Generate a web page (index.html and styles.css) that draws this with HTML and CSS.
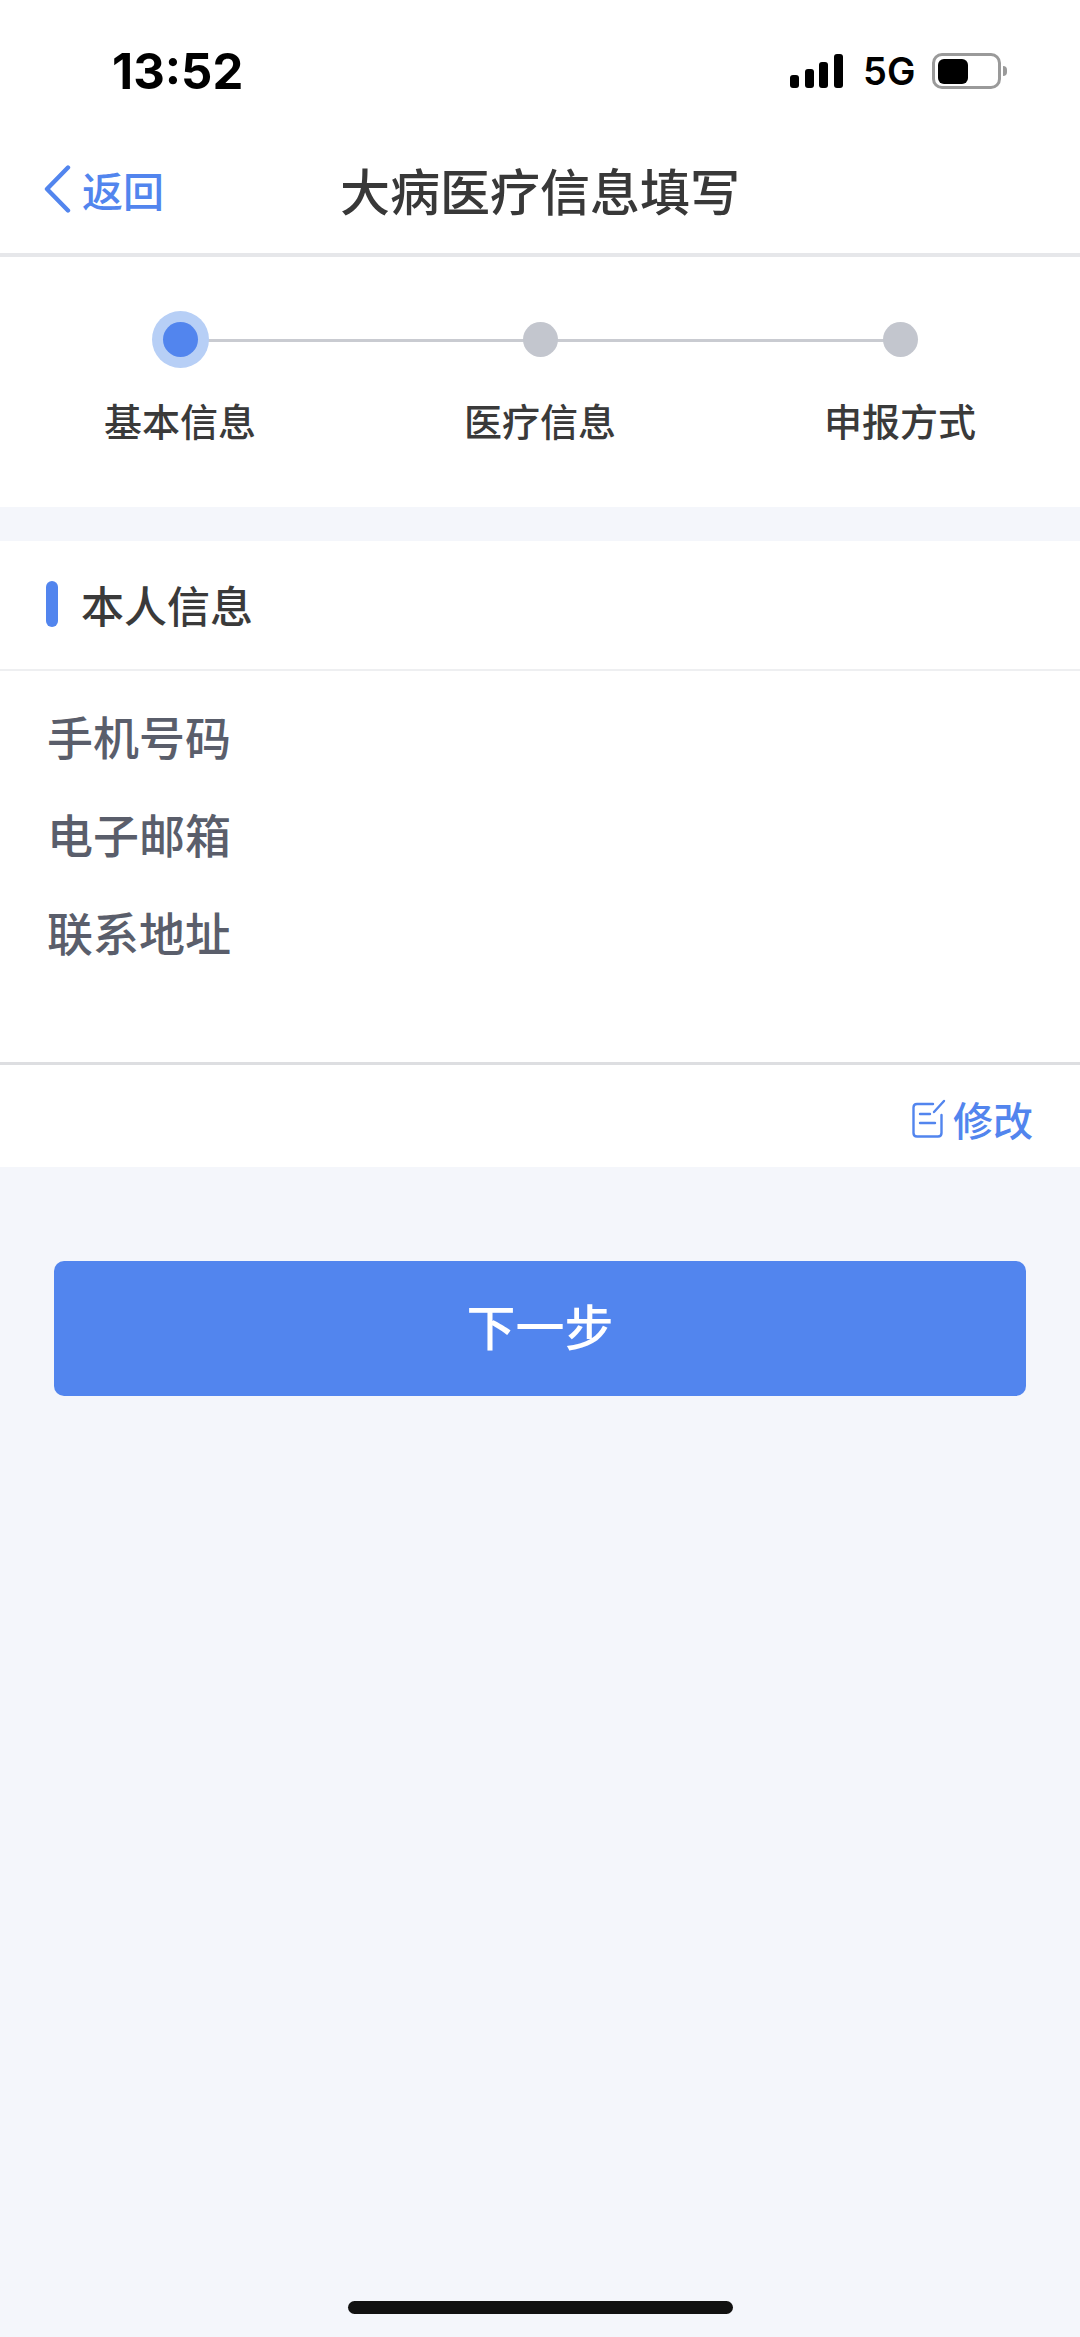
FILE: index.html
```html
<!DOCTYPE html>
<html lang="zh-CN">
<head>
  <meta charset="UTF-8" />
  <meta name="viewport" content="width=device-width, initial-scale=1.0">
  <title>大病医疗信息填写</title>
  <link rel="stylesheet" href="styles.css">
</head>
<body>

  <div class="status-bar">
    <span class="time">13:52</span>
    <div class="status-right">
      <div class="signal">
        <i class="bar bar-1"></i><i class="bar bar-2"></i><i class="bar bar-3"></i><i class="bar bar-4"></i>
      </div>
      <span class="network">5G</span>
      <div class="battery"><div class="battery-level"></div></div>
      <div class="battery-nub"></div>
    </div>
  </div>

  <div class="nav">
    <div class="back">
      <svg class="back-icon" width="27" height="48" viewBox="0 0 27 48" fill="none">
        <path d="M24 2.5 L3 24 L24 45.5" stroke="#5285ee" stroke-width="4.4" stroke-linecap="round" stroke-linejoin="round"/>
      </svg>
      <span>返回</span>
    </div>
    <div class="nav-title">大病医疗信息填写</div>
  </div>

  <div class="steps">
    <div class="step active">
      <div class="dot"></div>
      <div class="step-label">基本信息</div>
    </div>
    <div class="step">
      <div class="dot"></div>
      <div class="step-label">医疗信息</div>
    </div>
    <div class="step">
      <div class="dot"></div>
      <div class="step-label">申报方式</div>
    </div>
  </div>

  <div class="card">
    <div class="card-head">
      <i class="card-mark"></i>
      <span>本人信息</span>
    </div>
    <div class="info">
      <div class="info-row">手机号码</div>
      <div class="info-row">电子邮箱</div>
      <div class="info-row">联系地址</div>
    </div>
    <div class="card-foot">
      <svg width="34" height="40" viewBox="0 0 34 40" fill="none" stroke="#5285ee" stroke-width="2.4" stroke-linecap="round" stroke-linejoin="round">
        <path d="M21 5 H5 Q1.5 5 1.5 8.500 V34 Q1.500 37.500 5 37.500 H26 Q29.500 37.500 29.500 34 V16"/>
        <path d="M8 15 H18"/>
        <path d="M8 24 H23"/>
        <path d="M22 13 L32 2"/>
      </svg>
      <span>修改</span>
    </div>
  </div>

  <button class="next-button">下一步</button>

  <div class="home-bar"></div>

</body>
</html>
```

FILE: styles.css
```css
* {
  box-sizing: border-box;
}

html, body {
  height: 100%;
}

body {
  margin: 0;
  height: 2337px;
  overflow: hidden;
  display: flex;
  flex-direction: column;
  background: #f4f6fb;
  color: #333;
  font-family: "Noto Sans CJK SC", "Noto Sans", sans-serif;
}

.status-bar {
  height: 110px;
  padding: 0 73px 0 112px;
  background: #fff;
  display: flex;
  align-items: flex-start;
  justify-content: space-between;
}

.time {
  margin-top: 43px;
  font-family: Inter, "Liberation Sans", sans-serif;
  font-size: 49px;
  line-height: 58px;
  font-weight: 700;
  color: #000;
}

.status-right {
  margin-top: 53px;
  display: flex;
  align-items: flex-start;
}

.signal {
  width: 53px;
  height: 35px;
  display: flex;
  align-items: flex-end;
  justify-content: space-between;
}

.bar {
  width: 9px;
  background: #000;
  border-radius: 3px;
}

.bar-1 { height: 13px; }
.bar-2 { height: 19px; }
.bar-3 { height: 26px; }
.bar-4 { height: 34px; }

.network {
  margin-left: 20px;
  width: 50px;
  font-family: Inter, "Liberation Sans", sans-serif;
  font-size: 38px;
  line-height: 36px;
  font-weight: 600;
  color: #000;
  white-space: nowrap;
}

.battery {
  margin-left: 19px;
  width: 69px;
  height: 36px;
  padding: 3px;
  border: 3px solid #9a9a9a;
  border-radius: 10px;
}

.battery-level {
  width: 30px;
  height: 25px;
  background: #000;
  border-radius: 6px;
}

.battery-nub {
  margin: 13px 0 0 2px;
  width: 4px;
  height: 10px;
  background: #9a9a9a;
  border-radius: 0 5px 5px 0;
}

.nav {
  height: 147px;
  padding-top: 14px;
  background: #fff;
  border-bottom: 4px solid #e6e7ea;
  display: grid;
  grid-template-columns: 1fr auto 1fr;
  align-items: center;
}

.back {
  grid-column: 1;
  grid-row: 1;
  padding-left: 44px;
  display: flex;
  align-items: center;
  gap: 11px;
  color: #5285ee;
  font-size: 41px;
  font-weight: 500;
}

.nav-title {
  grid-column: 2;
  grid-row: 1;
  font-size: 50px;
  font-weight: 500;
  color: #383838;
}

.steps {
  height: 250px;
  background: #fff;
  display: grid;
  grid-template-columns: repeat(3, 1fr);
}

.step {
  position: relative;
  padding-top: 65px;
  display: flex;
  flex-direction: column;
  align-items: center;
}

/* line from this step's dot to the next one */
.step:not(:last-child)::after {
  content: "";
  position: absolute;
  left: 50%;
  top: 82px;
  width: 100%;
  height: 3px;
  background: #c9cbd1;
}

.dot {
  position: relative;
  z-index: 1;
  width: 35px;
  height: 35px;
  border-radius: 50%;
  background: #c3c6ce;
}

.step.active .dot {
  background: #5285ee;
  box-shadow: 0 0 0 11px #b7cff6;
}

.step-label {
  margin-top: 36px;
  font-size: 38px;
  line-height: 54px;
  font-weight: 500;
  color: #3a3a3a;
}

.card {
  margin-top: 34px;
  background: #fff;
}

.card-head {
  height: 130px;
  padding: 0 0 2px 46px;
  border-bottom: 2px solid #eeeff1;
  display: flex;
  align-items: center;
  gap: 23px;
  font-size: 43px;
  font-weight: 500;
  color: #3a3a3a;
}

.card-mark {
  width: 12px;
  height: 46px;
  border-radius: 6px;
  background: #5285ee;
}

.info {
  height: 394px;
  padding: 31px 0 0 47px;
  border-bottom: 3px solid #dddee1;
}

.info-row {
  height: 98px;
  font-size: 46px;
  line-height: 66px;
  font-weight: 500;
  color: #5a5e6b;
}

.card-foot {
  height: 102px;
  padding: 6px 47px 0 0;
  display: flex;
  align-items: center;
  justify-content: flex-end;
  gap: 7px;
  font-size: 40px;
  font-weight: 500;
  color: #5285ee;
}

.next-button {
  margin: 94px 54px 0;
  height: 135px;
  padding: 0 0 8px;
  border: none;
  border-radius: 10px;
  background: #5285ee;
  color: #fff;
  font-family: inherit;
  font-size: 49px;
  font-weight: 500;
}

.home-bar {
  margin: auto auto 23px;
  width: 385px;
  height: 13px;
  border-radius: 7px;
  background: #111;
}
```
